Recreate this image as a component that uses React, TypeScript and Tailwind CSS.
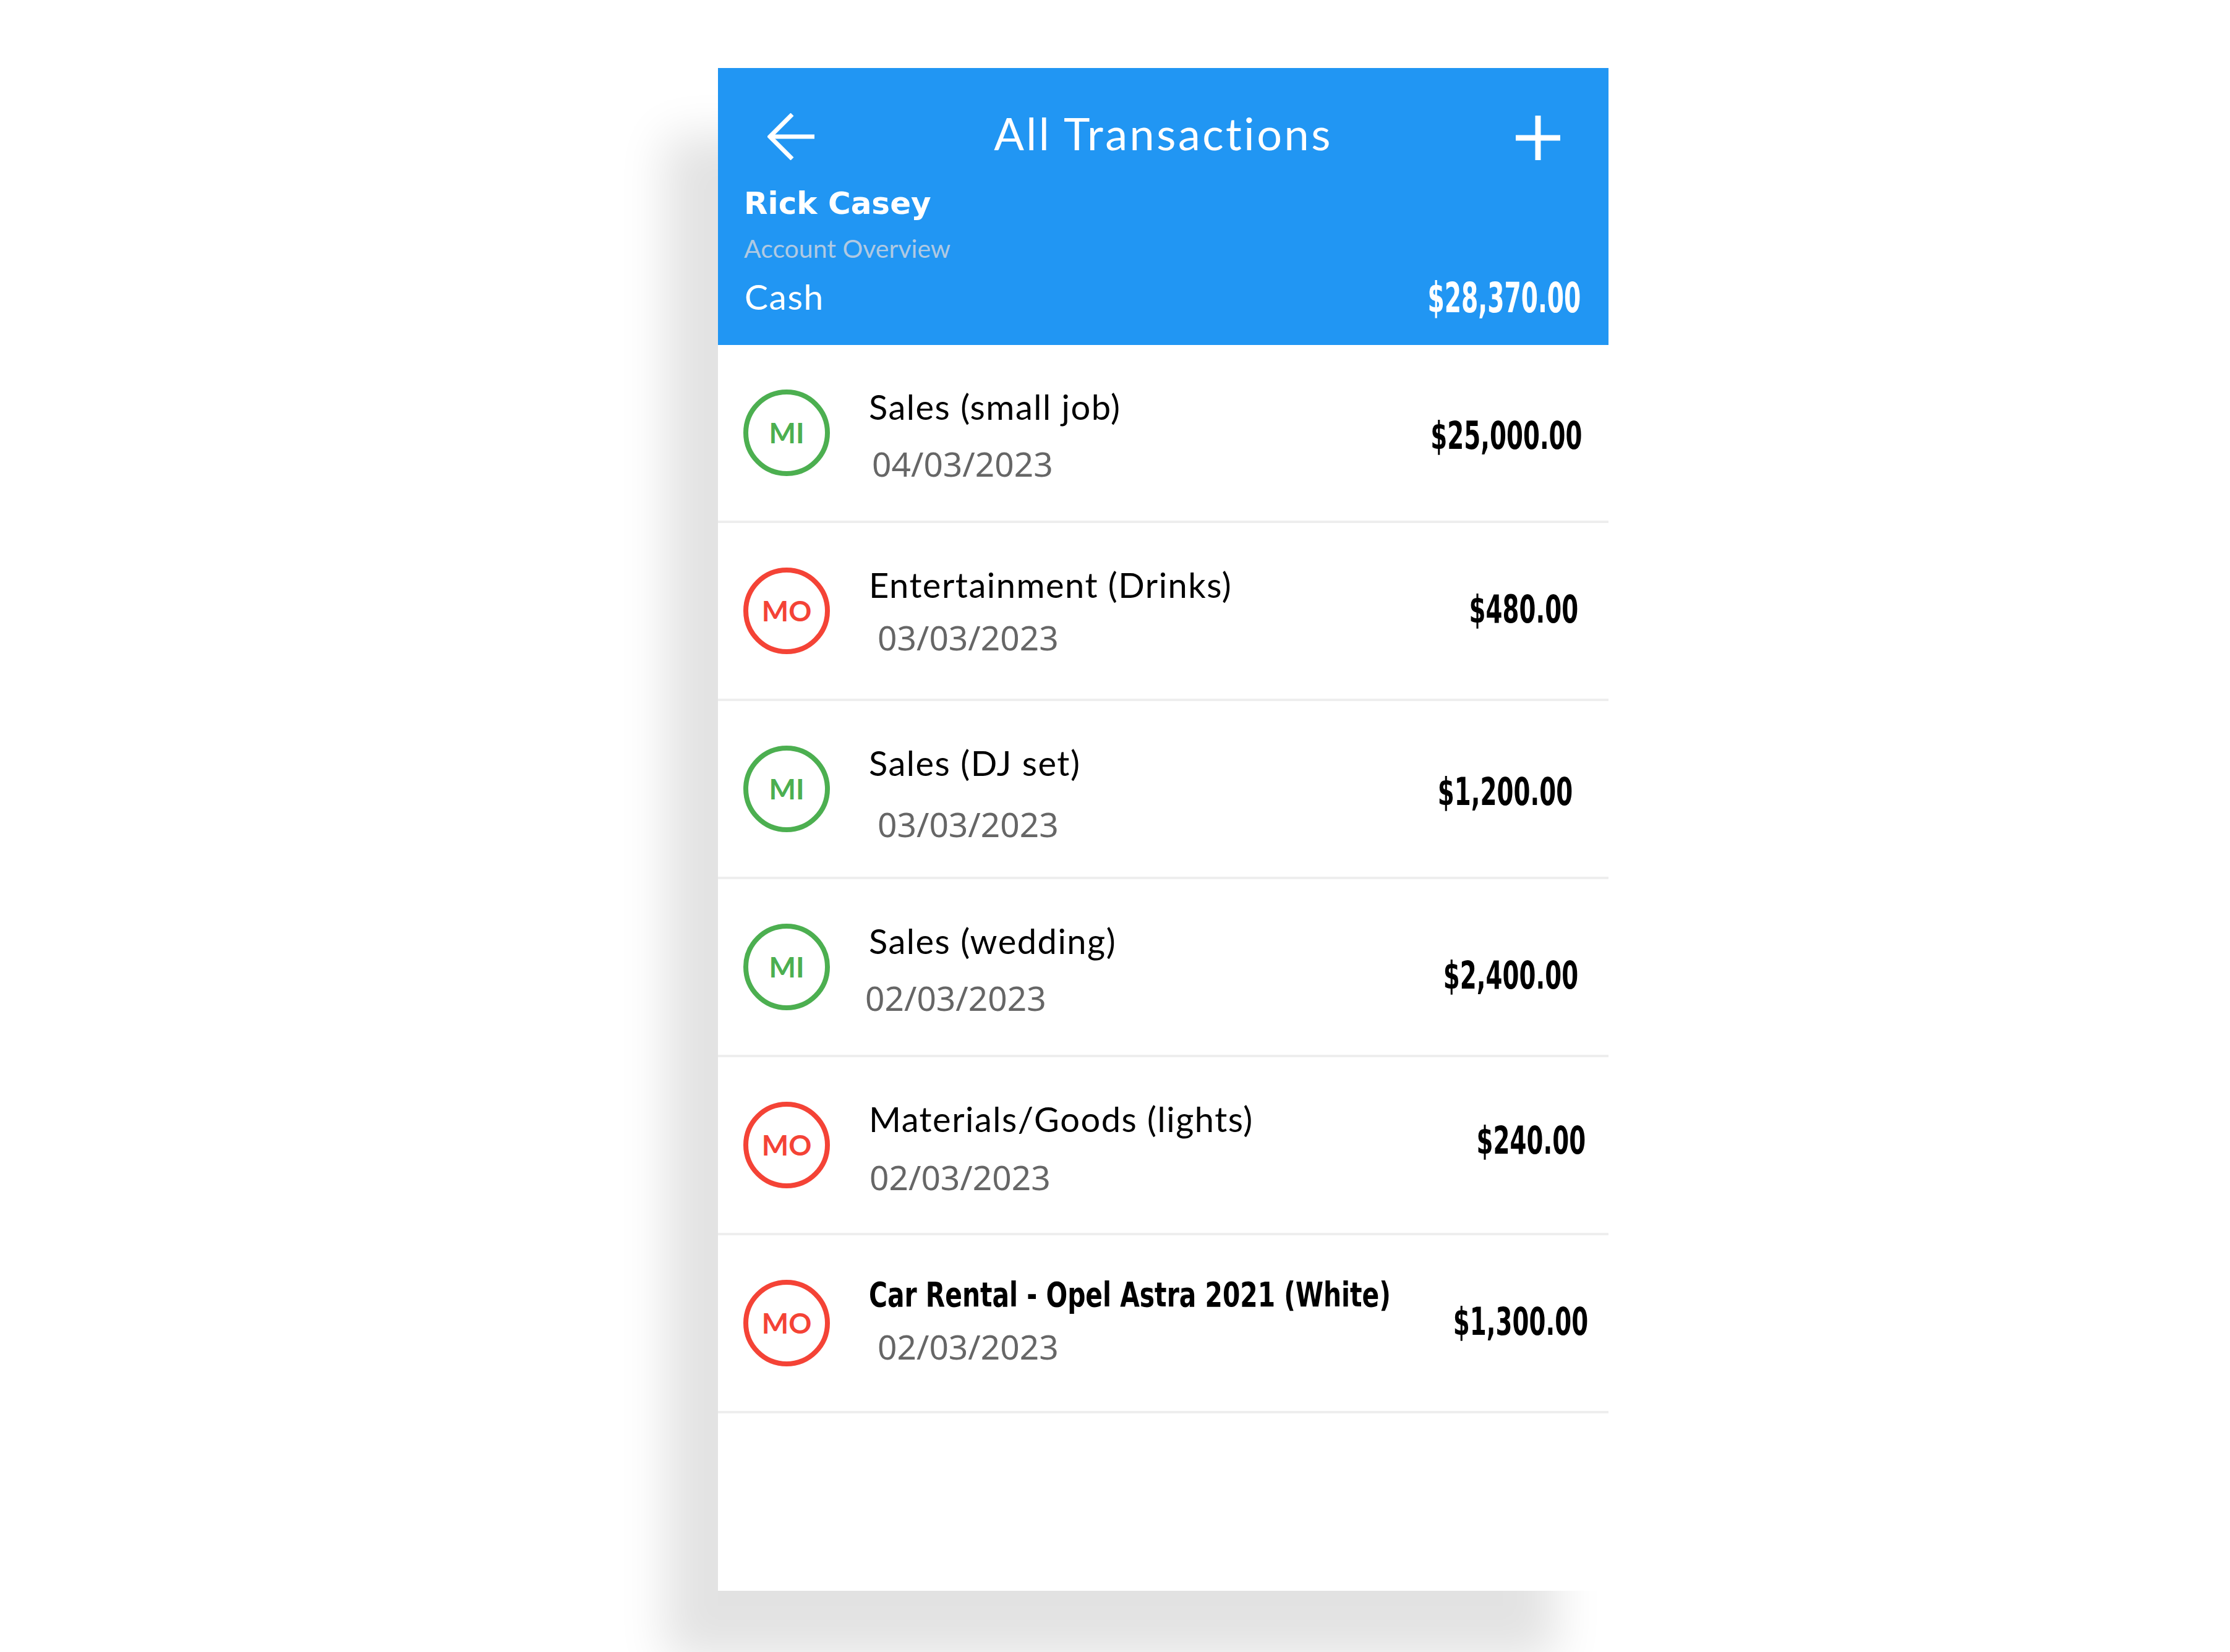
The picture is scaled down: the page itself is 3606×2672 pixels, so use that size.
import React from "react";

type Row = {
  kind: "MI" | "MO";
  title: string;
  date: string;
  amount: string;
  bold?: boolean;
  titleDy: number;
  dateDx: number;
  dateDy: number;
  amtRight: number;
  amtDy: number;
};

const rows: Row[] = [
  { kind: "MI", title: "Sales (small job)", date: "04/03/2023", amount: "$25,000.00", titleDy: 0, dateDx: 5, dateDy: 0, amtRight: 42, amtDy: 0 },
  { kind: "MO", title: "Entertainment (Drinks)", date: "03/03/2023", amount: "$480.00", titleDy: 0, dateDx: 14, dateDy: -7, amtRight: 49, amtDy: -7 },
  { kind: "MI", title: "Sales (DJ set)", date: "03/03/2023", amount: "$1,200.00", titleDy: 0, dateDx: 14, dateDy: 7, amtRight: 58, amtDy: 0 },
  { kind: "MI", title: "Sales (wedding)", date: "02/03/2023", amount: "$2,400.00", titleDy: 0, dateDx: -6, dateDy: 0, amtRight: 49, amtDy: 9 },
  { kind: "MO", title: "Materials/Goods (lights)", date: "02/03/2023", amount: "$240.00", titleDy: 0, dateDx: 1, dateDy: 2, amtRight: 37, amtDy: -12 },
  { kind: "MO", title: "Car Rental - Opel Astra 2021 (White)", date: "02/03/2023", amount: "$1,300.00", bold: true, titleDy: -4, dateDx: 14, dateDy: -12, amtRight: 33, amtDy: -7 },
];

const condensed = { fontFamily: '"DejaVu Sans Condensed", "DejaVu Sans", sans-serif' };

function BackArrow() {
  return (
    <svg width="76" height="76" viewBox="0 0 76 76" fill="none" stroke="white" strokeWidth="7" strokeLinecap="butt" strokeLinejoin="miter">
      <path d="M40 2 L4 38 L40 74" />
      <path d="M5 38 H76" />
    </svg>
  );
}

function Plus() {
  return (
    <svg width="72" height="72" viewBox="0 0 72 72" fill="none" stroke="white" strokeWidth="9">
      <path d="M36 0 V72" />
      <path d="M0 36 H72" />
    </svg>
  );
}

function TxRow({ r }: { r: Row }) {
  const green = r.kind === "MI";
  return (
    <div className="flex h-[288px] items-start border-b-4 border-[#eeeeee] pl-[41px]">
      <div
        className={
          "mt-[72px] flex h-[140px] w-[140px] shrink-0 items-center justify-center rounded-full border-[8px] " +
          (green ? "border-[#4caf50] text-[#4caf50]" : "border-[#f44336] text-[#f44336]")
        }
      >
        <span className="font-['Lato',sans-serif] text-[46px] leading-none font-bold">{r.kind}</span>
      </div>
      <div className="ml-[63px] flex min-w-0 flex-1 flex-col">
        {r.bold ? (
          <div
            className="h-[54px] origin-left scale-x-[0.825] text-[55px] leading-none font-bold whitespace-nowrap text-black"
            style={{ ...condensed, marginTop: 73 + r.titleDy }}
          >
            {r.title}
          </div>
        ) : (
          <div
            className="h-[54px] font-['Lato',sans-serif] text-[56px] leading-none tracking-[1.5px] whitespace-nowrap text-black"
            style={{ marginTop: 72 + r.titleDy }}
          >
            {r.title}
          </div>
        )}
        <div
          className="font-['Noto_Sans',sans-serif] text-[55px] leading-none whitespace-nowrap text-[#666666]"
          style={{ marginTop: 37 + r.dateDy - r.titleDy + (r.bold ? 0 : 1), marginLeft: r.dateDx }}
        >
          {r.date}
        </div>
      </div>
      <div
        className="shrink-0 origin-right scale-x-[0.684] text-[63px] leading-none font-bold whitespace-nowrap text-black"
        style={{ ...condensed, marginTop: 115 + r.amtDy, marginRight: r.amtRight }}
      >
        {r.amount}
      </div>
    </div>
  );
}

export default function App() {
  return (
    <div className="relative h-[2672px] w-[3606px] overflow-hidden bg-white">
      <div className="pt-[110px] pl-[1161px]">
        <div className="flex h-[2463px] w-[1440px] flex-col bg-white shadow-[-85px_110px_70px_rgba(0,0,0,0.115)]">
          <div className="flex h-[448px] shrink-0 flex-col bg-[#2196f3] text-white">
            <div className="grid h-[149px] grid-cols-[1fr_auto_1fr] items-start">
              <div className="mt-[73px] ml-[80px] justify-self-start">
                <BackArrow />
              </div>
              <div className="mt-[69px] font-['Lato',sans-serif] text-[72px] leading-none tracking-[3.5px] whitespace-nowrap">
                All Transactions
              </div>
              <div className="mt-[77px] mr-[78px] justify-self-end">
                <Plus />
              </div>
            </div>
            <div className="mt-[45px] ml-[42px] font-['DejaVu_Sans',sans-serif] text-[50px] leading-none font-bold">Rick Casey</div>
            <div className="mt-[27px] ml-[42px] font-['Lato',sans-serif] text-[41px] leading-none font-normal text-[#b0c9e2]">
              Account Overview
            </div>
            <div className="mt-[27px] flex items-start pr-[45px] pl-[43px]">
              <div className="mt-[2px] font-['Lato',sans-serif] text-[57px] leading-none tracking-[1.5px]">Cash</div>
              <div
                className="ml-auto origin-right scale-x-[0.65] text-[67px] leading-none font-bold whitespace-nowrap"
                style={condensed}
              >
                $28,370.00
              </div>
            </div>
          </div>
          {rows.map((r, i) => (
            <TxRow key={i} r={r} />
          ))}
        </div>
      </div>
    </div>
  );
}
